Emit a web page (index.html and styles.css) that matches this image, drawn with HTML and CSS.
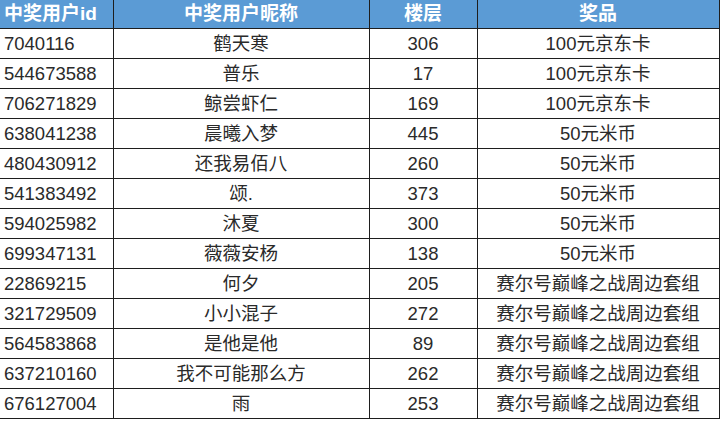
FILE: index.html
```html
<!DOCTYPE html>
<html lang="zh">
<head>
<meta charset="utf-8">
<link rel="stylesheet" href="styles.css">
</head>
<body>
<table class="winners">
  <colgroup>
    <col class="c-id"><col class="c-name"><col class="c-floor"><col class="c-prize">
  </colgroup>
  <thead>
    <tr><th class="left">中奖用户id</th><th>中奖用户昵称</th><th>楼层</th><th>奖品</th></tr>
  </thead>
  <tbody>
    <tr><td class="left">7040116</td><td>鹤天寒</td><td>306</td><td>100元京东卡</td></tr>
    <tr><td class="left">544673588</td><td>普乐</td><td>17</td><td>100元京东卡</td></tr>
    <tr><td class="left">706271829</td><td>鲸尝虾仁</td><td>169</td><td>100元京东卡</td></tr>
    <tr><td class="left">638041238</td><td>晨曦入梦</td><td>445</td><td>50元米币</td></tr>
    <tr><td class="left">480430912</td><td>还我易佰八</td><td>260</td><td>50元米币</td></tr>
    <tr><td class="left">541383492</td><td>颂.</td><td>373</td><td>50元米币</td></tr>
    <tr><td class="left">594025982</td><td>沐夏</td><td>300</td><td>50元米币</td></tr>
    <tr><td class="left">699347131</td><td>薇薇安杨</td><td>138</td><td>50元米币</td></tr>
    <tr><td class="left">22869215</td><td>何夕</td><td>205</td><td>赛尔号巅峰之战周边套组</td></tr>
    <tr><td class="left">321729509</td><td>小小混子</td><td>272</td><td>赛尔号巅峰之战周边套组</td></tr>
    <tr><td class="left">564583868</td><td>是他是他</td><td>89</td><td>赛尔号巅峰之战周边套组</td></tr>
    <tr><td class="left">637210160</td><td>我不可能那么方</td><td>262</td><td>赛尔号巅峰之战周边套组</td></tr>
    <tr><td class="left">676127004</td><td>雨</td><td>253</td><td>赛尔号巅峰之战周边套组</td></tr>
  </tbody>
</table>
</body>
</html>
```
FILE: styles.css
```css
html, body {
  margin: 0;
  padding: 0;
  background: #ffffff;
}
.winners {
  border-collapse: collapse;
  table-layout: fixed;
  width: 719px;
  font-family: "Liberation Sans", Arial, "Noto Sans CJK SC", sans-serif;
  font-size: 18.5px;
  color: #2a2a2a;
}
.c-id { width: 113px; }
.c-name { width: 256px; }
.c-floor { width: 108px; }
.c-prize { width: 242px; }
.winners th, .winners td {
  border: 1px solid #1e1e1e;
  padding: 0 4px;
  text-align: center;
  white-space: nowrap;
  line-height: 20px;
}
.winners th {
  background: #5b9bd5;
  color: #ffffff;
  font-weight: bold;
  font-size: 19px;
  height: 28px;
  border-top: none;
}
.winners td {
  height: 29px;
}
.winners .left {
  text-align: left;
  border-left: none;
}
```
